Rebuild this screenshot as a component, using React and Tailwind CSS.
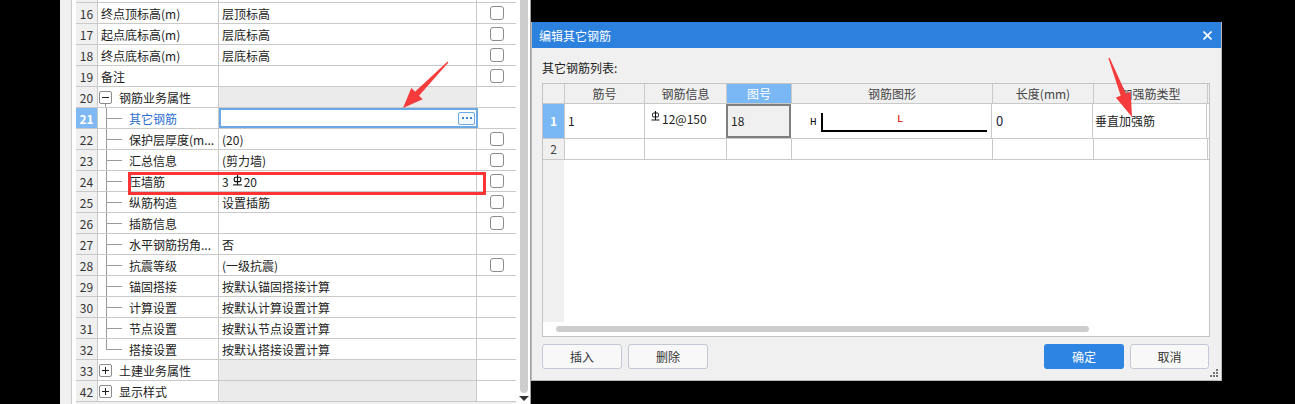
import React from "react";

const leftRows = [
  { n: 16, name: "终点顶标高(m)", val: "层顶标高", cb: true },
  { n: 17, name: "起点底标高(m)", val: "层底标高", cb: true },
  { n: 18, name: "终点底标高(m)", val: "层底标高", cb: true },
  { n: 19, name: "备注", val: "", cb: true },
  { n: 20, name: "钢筋业务属性", group: "minus" },
  { n: 21, name: "其它钢筋", child: true, active: true },
  { n: 22, name: "保护层厚度(m...", val: "(20)", cb: true, child: true },
  { n: 23, name: "汇总信息", val: "(剪力墙)", cb: true, child: true },
  { n: 24, name: "压墙筋", val: "rebar", cb: true, child: true },
  { n: 25, name: "纵筋构造", val: "设置插筋", cb: true, child: true },
  { n: 26, name: "插筋信息", val: "", cb: true, child: true },
  { n: 27, name: "水平钢筋拐角...", val: "否", child: true },
  { n: 28, name: "抗震等级", val: "(一级抗震)", cb: true, child: true },
  { n: 29, name: "锚固搭接", val: "按默认锚固搭接计算", child: true },
  { n: 30, name: "计算设置", val: "按默认计算设置计算", child: true },
  { n: 31, name: "节点设置", val: "按默认节点设置计算", child: true },
  { n: 32, name: "搭接设置", val: "按默认搭接设置计算", child: true, last: true },
  { n: 33, name: "土建业务属性", group: "plus" },
  { n: 42, name: "显示样式", group: "plus" },
];

// grade III rebar mark, drawn since no font has it
function RebarMark({ big }) {
  return (
    <svg
      width={big ? 11 : 9}
      height={big ? 11 : 10}
      viewBox="0 0 9 10"
      className="inline-block -translate-y-[3px] mx-[1px]"
    >
      <rect x="1.5" y="2" width="6" height="4" rx="1.2" fill="none" stroke="#111" strokeWidth="1" />
      <line x1="4.5" y1="0" x2="4.5" y2="9" stroke="#111" strokeWidth="1" />
      <line x1="0.5" y1="9" x2="8.5" y2="9" stroke="#111" strokeWidth="1" />
    </svg>
  );
}

function Checkbox() {
  return <div className="w-[14px] h-[14px] rounded-[3px] border border-[#8c8c8c] bg-white" />;
}

function ToggleBox({ plus }) {
  return (
    <div className="w-[13px] h-[13px] rounded-[2px] border border-[#8c8c8c] bg-white flex items-center justify-center">
      <div className="relative w-[7px] h-[7px] flex items-center justify-center">
        <div className="w-[7px] h-px bg-[#222]" />
        {plus && <div className="absolute left-[3px] top-0 w-px h-[7px] bg-[#222]" />}
      </div>
    </div>
  );
}

function NameCell({ row }) {
  if (row.group) {
    return (
      <div className="flex items-center h-full">
        <div className="ml-px h-full flex flex-col items-center">
          <div className="flex-1" />
          <ToggleBox plus={row.group === "plus"} />
          <div className={"flex-1 w-px " + (row.group === "minus" ? "bg-[#9a9a9a]" : "")} />
        </div>
        <span className="ml-[7px] pt-px">{row.name}</span>
      </div>
    );
  }
  if (row.child) {
    return (
      <div className="flex items-center h-full">
        <div className="ml-[8px] w-[16px] h-full flex flex-col">
          <div className="flex-1 border-l border-b border-[#9a9a9a]" />
          <div className={"flex-1 " + (row.last ? "" : "border-l border-[#9a9a9a]")} />
        </div>
        <span className={"ml-[7px] pt-px " + (row.active ? "text-[#2b6fd4]" : "")}>{row.name}</span>
      </div>
    );
  }
  return <div className="flex items-center h-full pl-[3px] pt-px">{row.name}</div>;
}

function LeftRow({ row }) {
  return (
    <div className="flex h-[21px] border-b border-[#c9c9c9] shrink-0">
      <div
        className={
          "w-[22px] shrink-0 border-r border-[#c9c9c9] flex items-center justify-center pt-px " +
          (row.active ? "bg-[#7fb8f2] text-white font-bold" : "bg-[#f0f0f0] text-[#333]")
        }
      >
        {row.n}
      </div>
      <div className="w-[121px] shrink-0 border-r border-[#c9c9c9] whitespace-nowrap overflow-hidden">
        <NameCell row={row} />
      </div>
      {row.active ? (
        <div className="w-[259px] -mr-px shrink-0 bg-white border-2 border-[#6aa8e6] flex items-center justify-end pr-[1px] z-10">
          <div className="w-[17px] h-[13px] rounded-[2px] border border-[#6aa8e6] bg-[#f4f9ff] flex items-center justify-center gap-[2px]">
            <div className="w-[2px] h-[2px] bg-[#3d86d8]" />
            <div className="w-[2px] h-[2px] bg-[#3d86d8]" />
            <div className="w-[2px] h-[2px] bg-[#3d86d8]" />
          </div>
        </div>
      ) : (
        <div
          className={
            "w-[258px] shrink-0 border-r border-[#c9c9c9] flex items-center pl-[3px] pt-px whitespace-nowrap " +
            (row.group ? "bg-[#ebebeb]" : "")
          }
        >
          {row.val === "rebar" ? (
            <span className="flex items-center">
              3<span className="ml-[2px]"><RebarMark big /></span>20
            </span>
          ) : (
            row.val
          )}
        </div>
      )}
      <div className="w-[39px] shrink-0 flex items-center justify-center pl-[1px]">{row.cb && <Checkbox />}</div>
    </div>
  );
}

function LeftPanel() {
  return (
    <div className="w-[471px] h-full shrink-0 flex bg-white text-[12px] text-[#222]">
      <div className="w-[12px] h-full bg-[#f0f0f0] border-r border-[#c9c9c9]" />
      <div className="w-[4px] h-full bg-white" />
      <div className="w-[440px] h-full flex flex-col overflow-hidden">
        <div className="-mt-[18px]">
          <LeftRow row={{ n: "", name: "", val: "" }} />
        </div>
        {leftRows.map((r) => (
          <LeftRow key={r.n} row={r} />
        ))}
        <div className="flex-1 bg-[#f0f0f0]" />
      </div>
      <div className="w-[14px] h-full flex flex-col pl-[4px] pr-[2px]">
        <div className="h-[393px] w-[8px] bg-[#cdcdcd] rounded-b-[4px]" />
        <div className="flex-1 flex items-center justify-center">
          <div className="w-0 h-0 border-l-[5px] border-r-[5px] border-t-[5px] border-l-transparent border-r-transparent border-t-[#333]" />
        </div>
      </div>
      <div className="w-px h-full bg-[#9e9e9e]" />
    </div>
  );
}

const cols = [
  { label: "筋号", w: "w-[80px]" },
  { label: "钢筋信息", w: "w-[82px]" },
  { label: "图号", w: "w-[65px]", hi: true },
  { label: "钢筋图形", w: "w-[201px]" },
  { label: "长度(mm)", w: "w-[101px]" },
  { label: "加强筋类型", w: "w-[114px]" },
];

function RebarTable() {
  return (
    <div className="w-[668px] h-[254px] border border-[#c3c3c3] bg-white flex flex-col text-[12px]">
      <div className="flex h-[20px] border-b border-[#c9c9c9] bg-[#f0f0f0] shrink-0">
        <div className="w-[22px] border-r border-[#c9c9c9]" />
        {cols.map((c) => (
          <div
            key={c.label}
            className={
              c.w +
              " shrink-0 border-r border-[#c9c9c9] flex items-center justify-center pt-px " +
              (c.hi ? "bg-[#7ab7f5] text-white" : "text-[#444]")
            }
          >
            {c.label}
          </div>
        ))}
      </div>
      <div className="flex h-[35px] border-b border-[#c9c9c9] shrink-0">
        <div className="w-[22px] border-r border-[#c9c9c9] bg-[#7ab7f5] text-white font-bold flex items-center justify-center">1</div>
        <div className="w-[80px] border-r border-[#c9c9c9] flex items-center pl-[3px]">1</div>
        <div className="w-[82px] border-r border-[#c9c9c9] flex items-center pl-[5px] -mt-[4px]">
          <RebarMark />
          <span className="ml-px">12@150</span>
        </div>
        <div className="w-[65px] -ml-px border-2 border-[#7f7f7f] bg-[#f0f0f0] flex items-center pl-[3px]">18</div>
        <div className="w-[201px] border-r border-[#c9c9c9] flex items-center">
          <svg width="200" height="34" viewBox="0 0 200 34">
            <text x="19" y="21" fontFamily="Liberation Mono, monospace" fontSize="11" fill="#111">H</text>
            <polyline points="31,9 31,27 196,27" fill="none" stroke="#000" strokeWidth="2" />
            <text x="106" y="18" fontFamily="Liberation Mono, monospace" fontSize="11" fill="#e00000">L</text>
          </svg>
        </div>
        <div className="w-[101px] border-r border-[#c9c9c9] flex items-center pl-[4px] text-[13px] text-[#1a1a3a]">0</div>
        <div className="w-[114px] border-r border-[#c9c9c9] flex items-center pl-[2px]">垂直加强筋</div>
      </div>
      <div className="flex h-[21px] border-b border-[#c9c9c9] shrink-0">
        <div className="w-[22px] border-r border-[#c9c9c9] bg-[#f0f0f0] text-[#444] flex items-center justify-center">2</div>
        {cols.map((c) => (
          <div key={c.label} className={c.w + " shrink-0 border-r border-[#c9c9c9]"} />
        ))}
      </div>
      <div className="flex-1 flex">
        <div className="w-[21px] bg-[#f0f0f0]" />
      </div>
      <div className="h-[14px] shrink-0 flex items-center pl-[13px]">
        <div className="w-[533px] h-[6px] rounded-full bg-[#cdcdcd]" />
      </div>
    </div>
  );
}

function Dialog() {
  return (
    <div className="w-[691px] h-[359px] shrink-0 flex flex-col bg-[#f0f0f0] border-l border-r border-b border-[#b9b9b9] text-[12px] text-[#222]">
      <div className="h-[26px] shrink-0 bg-[#2c80de] flex items-center justify-between pl-[7px] pr-[9px] text-white">
        <span className="pt-px">编辑其它钢筋</span>
        <svg width="9" height="9" viewBox="0 0 9 9">
          <line x1="0.5" y1="0.5" x2="8.5" y2="8.5" stroke="#fff" strokeWidth="1.6" />
          <line x1="8.5" y1="0.5" x2="0.5" y2="8.5" stroke="#fff" strokeWidth="1.6" />
        </svg>
      </div>
      <div className="pl-[10px] pt-[13px] leading-[14px]">其它钢筋列表:</div>
      <div className="pl-[10px] mt-[8px]">
        <RebarTable />
      </div>
      <div className="flex items-center pl-[10px] mt-[7px] h-[25px]">
        <button className="w-[80px] h-[25px] rounded-[3px] border border-[#c2c9d4] bg-[#f8f8f8] text-[#333]">插入</button>
        <button className="ml-[6px] w-[80px] h-[25px] rounded-[3px] border border-[#c2c9d4] bg-[#f8f8f8] text-[#333]">删除</button>
        <div className="flex-1" />
        <button className="w-[80px] h-[25px] rounded-[3px] bg-[#2e84e2] text-white">确定</button>
        <button className="ml-[6px] w-[79px] h-[25px] rounded-[3px] border border-[#c2c9d4] bg-[#f8f8f8] text-[#333]">取消</button>
        <div className="w-[12px]" />
      </div>
      <div className="flex-1 flex justify-end items-end pr-[2px] pb-[2px]">
        <svg width="9" height="9" viewBox="0 0 9 9">
          <rect x="6" y="0" width="2" height="2" fill="#777" />
          <rect x="3" y="3" width="2" height="2" fill="#777" />
          <rect x="6" y="3" width="2" height="2" fill="#777" />
          <rect x="0" y="6" width="2" height="2" fill="#777" />
          <rect x="3" y="6" width="2" height="2" fill="#777" />
          <rect x="6" y="6" width="2" height="2" fill="#777" />
        </svg>
      </div>
    </div>
  );
}

function arrowPoints(tx, ty, px, py, head = 20, wing = 8) {
  const len = Math.hypot(px - tx, py - ty);
  const dx = (px - tx) / len;
  const dy = (py - ty) / len;
  const nx = -dy;
  const ny = dx;
  const bx = px - dx * head;
  const by = py - dy * head;
  const p = (x, y) => `${x.toFixed(1)},${y.toFixed(1)}`;
  return [
    p(tx + nx * 0.6, ty + ny * 0.6),
    p(bx + nx * 2.8, by + ny * 2.8),
    p(bx + nx * wing, by + ny * wing),
    p(px, py),
    p(bx - nx * wing, by - ny * wing),
    p(bx - nx * 2.8, by - ny * 2.8),
    p(tx - nx * 0.6, ty - ny * 0.6),
  ].join(" ");
}

export default function App() {
  return (
    <div className="relative w-[1295px] h-[404px] bg-black flex overflow-hidden font-[family-name:'Noto_Sans_CJK_SC','Noto_Sans',sans-serif]">
      <div className="w-[60px] shrink-0" />
      <LeftPanel />
      <div className="flex flex-col">
        <div className="h-[22px] shrink-0" />
        <Dialog />
      </div>
      <svg className="absolute left-0 top-0 pointer-events-none" width="1295" height="404">
        <rect x="129.5" y="173.5" width="355" height="20" fill="none" stroke="#ff3535" strokeWidth="3" />
        <polygon points={arrowPoints(448, 62, 403, 108)} fill="#f53b3b" />
        <polygon points={arrowPoints(1109, 58, 1132, 117, 24, 8)} fill="#f53b3b" />
      </svg>
    </div>
  );
}
